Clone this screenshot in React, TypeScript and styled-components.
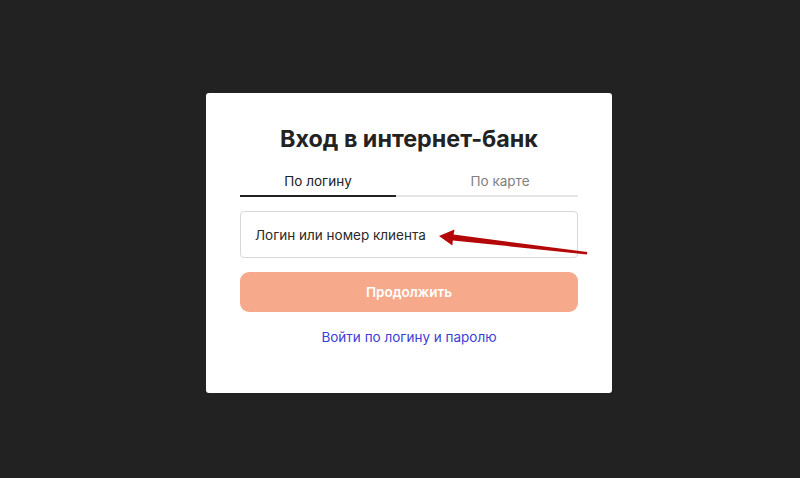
import styled, { createGlobalStyle } from "styled-components";

const GlobalStyle = createGlobalStyle`
  html, body {
    margin: 0;
    padding: 0;
    background: #222222;
  }
  * {
    box-sizing: border-box;
  }
`;

export default function App() {
  return (
    <Page>
      <GlobalStyle />
      <Card>
        <Title>Вход в интернет-банк</Title>

        <Tabs>
          <Tab $active>По логину</Tab>
          <Tab $wide>По карте</Tab>
        </Tabs>

        <Field>
          <Input placeholder="Логин или номер клиента" />
        </Field>

        <Button type="button">Продолжить</Button>

        <LinkRow>
          <Link href="#">Войти по логину и паролю</Link>
        </LinkRow>

        <Annotation viewBox="0 0 406 300" aria-hidden>
          <polygon
            points="233,143 248.5,136.6 247.6,141.6 381.3,159 380.9,161.4 246.8,147.4 246.4,152.4"
            fill="#b40808"
          />
        </Annotation>
      </Card>
    </Page>
  );
}

const Page = styled.div`
  min-height: 100vh;
  display: flex;
  align-items: center;
  justify-content: center;
  padding: 8px 0 0 18px;
  font-family: Inter, "Noto Sans", sans-serif;
`;

const Card = styled.div`
  position: relative;
  width: 406px;
  height: 300px;
  padding: 31px 34px 0;
  background: #ffffff;
  border-radius: 3px;
  display: flex;
  flex-direction: column;
`;

const Title = styled.h1`
  margin: 0;
  font-size: 23.3px;
  line-height: 30px;
  font-weight: 700;
  color: #222222;
  text-align: center;
`;

const Tabs = styled.div`
  display: flex;
  margin-top: 17px;
  border-bottom: 2px solid #e6e6e6;
`;

const Tab = styled.div<{ $active?: boolean; $wide?: boolean }>`
  flex: ${(p) => (p.$wide ? "1" : "0 0 156px")};
  padding: 0 0 4px ${(p) => (p.$wide ? "26px" : "0")};
  margin-bottom: -2px;
  font-size: 13.5px;
  line-height: 20px;
  text-align: center;
  color: ${(p) => (p.$active ? "#222222" : "#808080")};
  border-bottom: 2px solid ${(p) => (p.$active ? "#222222" : "transparent")};
`;

const Field = styled.div`
  margin-top: 14px;
`;

const Input = styled.input`
  width: 100%;
  height: 47px;
  padding: 0 14px;
  border: 1px solid #d8d8d8;
  border-radius: 4px;
  font-family: inherit;
  font-size: 13.5px;
  color: #222222;
  outline: none;

  &::placeholder {
    color: #2a2a2a;
    opacity: 1;
  }
`;

const Button = styled.button`
  margin-top: 14px;
  height: 40px;
  width: 100%;
  border: none;
  border-radius: 9px;
  background: #f6aa8b;
  color: #ffffff;
  font-family: inherit;
  font-size: 13.5px;
  font-weight: 600;
  cursor: pointer;
`;

const LinkRow = styled.div`
  margin-top: 14px;
  text-align: center;
  line-height: 20px;
`;

const Link = styled.a`
  font-size: 13.5px;
  color: #3d3dd6;
  text-decoration: none;
`;

const Annotation = styled.svg`
  position: absolute;
  left: 0;
  top: 0;
  width: 100%;
  height: 100%;
  overflow: visible;
  pointer-events: none;
`;
